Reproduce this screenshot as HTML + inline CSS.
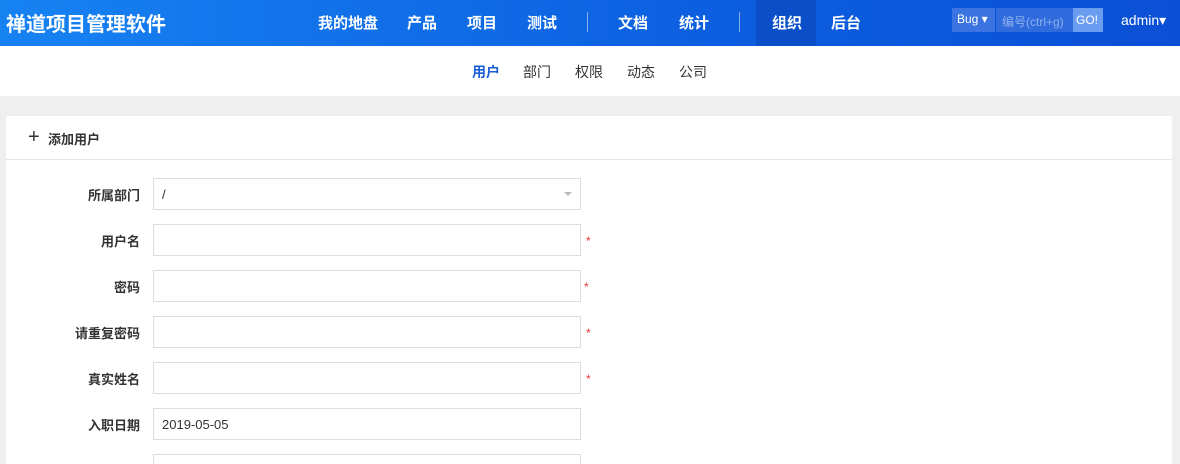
<!DOCTYPE html><html><head><meta charset="utf-8"><style>
*{margin:0;padding:0;box-sizing:border-box}
html,body{width:1180px;height:464px;overflow:hidden}
body{background:#efefef;font-family:"Liberation Sans","Noto Sans CJK SC",sans-serif;font-size:13px;color:#333;position:relative}
.hd{position:absolute;left:0;top:0;width:1180px;height:46px;background:linear-gradient(90deg,#1682f2,#0c5fe0 60%,#0b4fd5)}
.logo{position:absolute;left:6px;top:8px;color:#fff;font-size:20px;font-weight:bold}
.nv{position:absolute;top:12px;color:#fff;font-size:15px;font-weight:bold}
.sep{position:absolute;top:12px;width:1px;height:20px;background:rgba(255,255,255,.5)}
.act{position:absolute;left:756px;top:0;width:60px;height:46px;background:#0a4ec8}
.sn{position:absolute;left:0;top:46px;width:1180px;height:50px;background:#fff}
.sn span{position:absolute;top:16px;font-size:14px;color:#333}
.pn{position:absolute;left:6px;top:116px;width:1166px;height:360px;background:#fff;border-radius:3px}
.ph{height:44px;border-bottom:1px solid #e5e5e5;position:relative}
.lb{position:absolute;width:134px;text-align:right;font-weight:bold;font-size:13px;color:#333}
.in{position:absolute;left:153px;width:428px;height:32px;border:1px solid #ddd;background:#fff;padding:8px;font-size:13px}
.st{position:absolute;left:586px;color:#e33;font-size:12px}
</style></head><body>
<div class="hd">
<div class="logo">禅道项目管理软件</div>
<div class="act"></div>
<span class="nv" style="left:318px">我的地盘</span>
<span class="nv" style="left:407px">产品</span>
<span class="nv" style="left:467px">项目</span>
<span class="nv" style="left:527px">测试</span>
<div class="sep" style="left:587px"></div>
<span class="nv" style="left:618px">文档</span>
<span class="nv" style="left:679px">统计</span>
<div class="sep" style="left:739px"></div>
<span class="nv" style="left:772px">组织</span>
<span class="nv" style="left:831px">后台</span>
<div style="position:absolute;left:952px;top:8px;width:43px;height:24px;background:#3b74e0;color:#fff;font-size:12px;padding:4px 0 0 5px">Bug ▾</div>
<div style="position:absolute;left:996px;top:8px;width:77px;height:24px;background:#2f6bdc;color:#8fb0ee;font-size:12px;padding:5px 0 0 6px">编号(ctrl+g)</div>
<div style="position:absolute;left:1073px;top:8px;width:30px;height:24px;background:#6a9cf0;color:#fff;font-size:12px;padding:5px 0 0 3px">GO!</div>
<div style="position:absolute;left:1121px;top:12px;color:#fff;font-size:14px">admin▾</div>
</div>
<div class="sn">
<span style="left:472px;color:#1a5fd8;font-weight:bold">用户</span>
<span style="left:523px">部门</span>
<span style="left:575px">权限</span>
<span style="left:627px">动态</span>
<span style="left:679px">公司</span>
</div>
<div class="pn"><div class="ph"><span style="position:absolute;left:22px;top:11px;font-size:20px;line-height:20px">+</span><span style="position:absolute;left:42px;top:13px;font-weight:bold">添加用户</span></div></div>
<div class="lb" style="left:6px;top:185px">所属部门</div><div class="in" style="top:178px">/<span style="position:absolute;right:8px;top:13px;border:4px solid transparent;border-top-color:#bbb"></span></div>
<div class="lb" style="left:6px;top:231px">用户名</div><div class="in" style="top:224px"></div><div class="st" style="top:234px">*</div>
<div class="lb" style="left:6px;top:277px">密码</div><div class="in" style="top:270px"></div><div class="st" style="top:280px;left:584px">*</div>
<div class="lb" style="left:6px;top:323px">请重复密码</div><div class="in" style="top:316px"></div><div class="st" style="top:326px">*</div>
<div class="lb" style="left:6px;top:369px">真实姓名</div><div class="in" style="top:362px"></div><div class="st" style="top:372px">*</div>
<div class="lb" style="left:6px;top:415px">入职日期</div><div class="in" style="top:408px">2019-05-05</div>
<div class="in" style="top:454px"></div>
</body></html>
